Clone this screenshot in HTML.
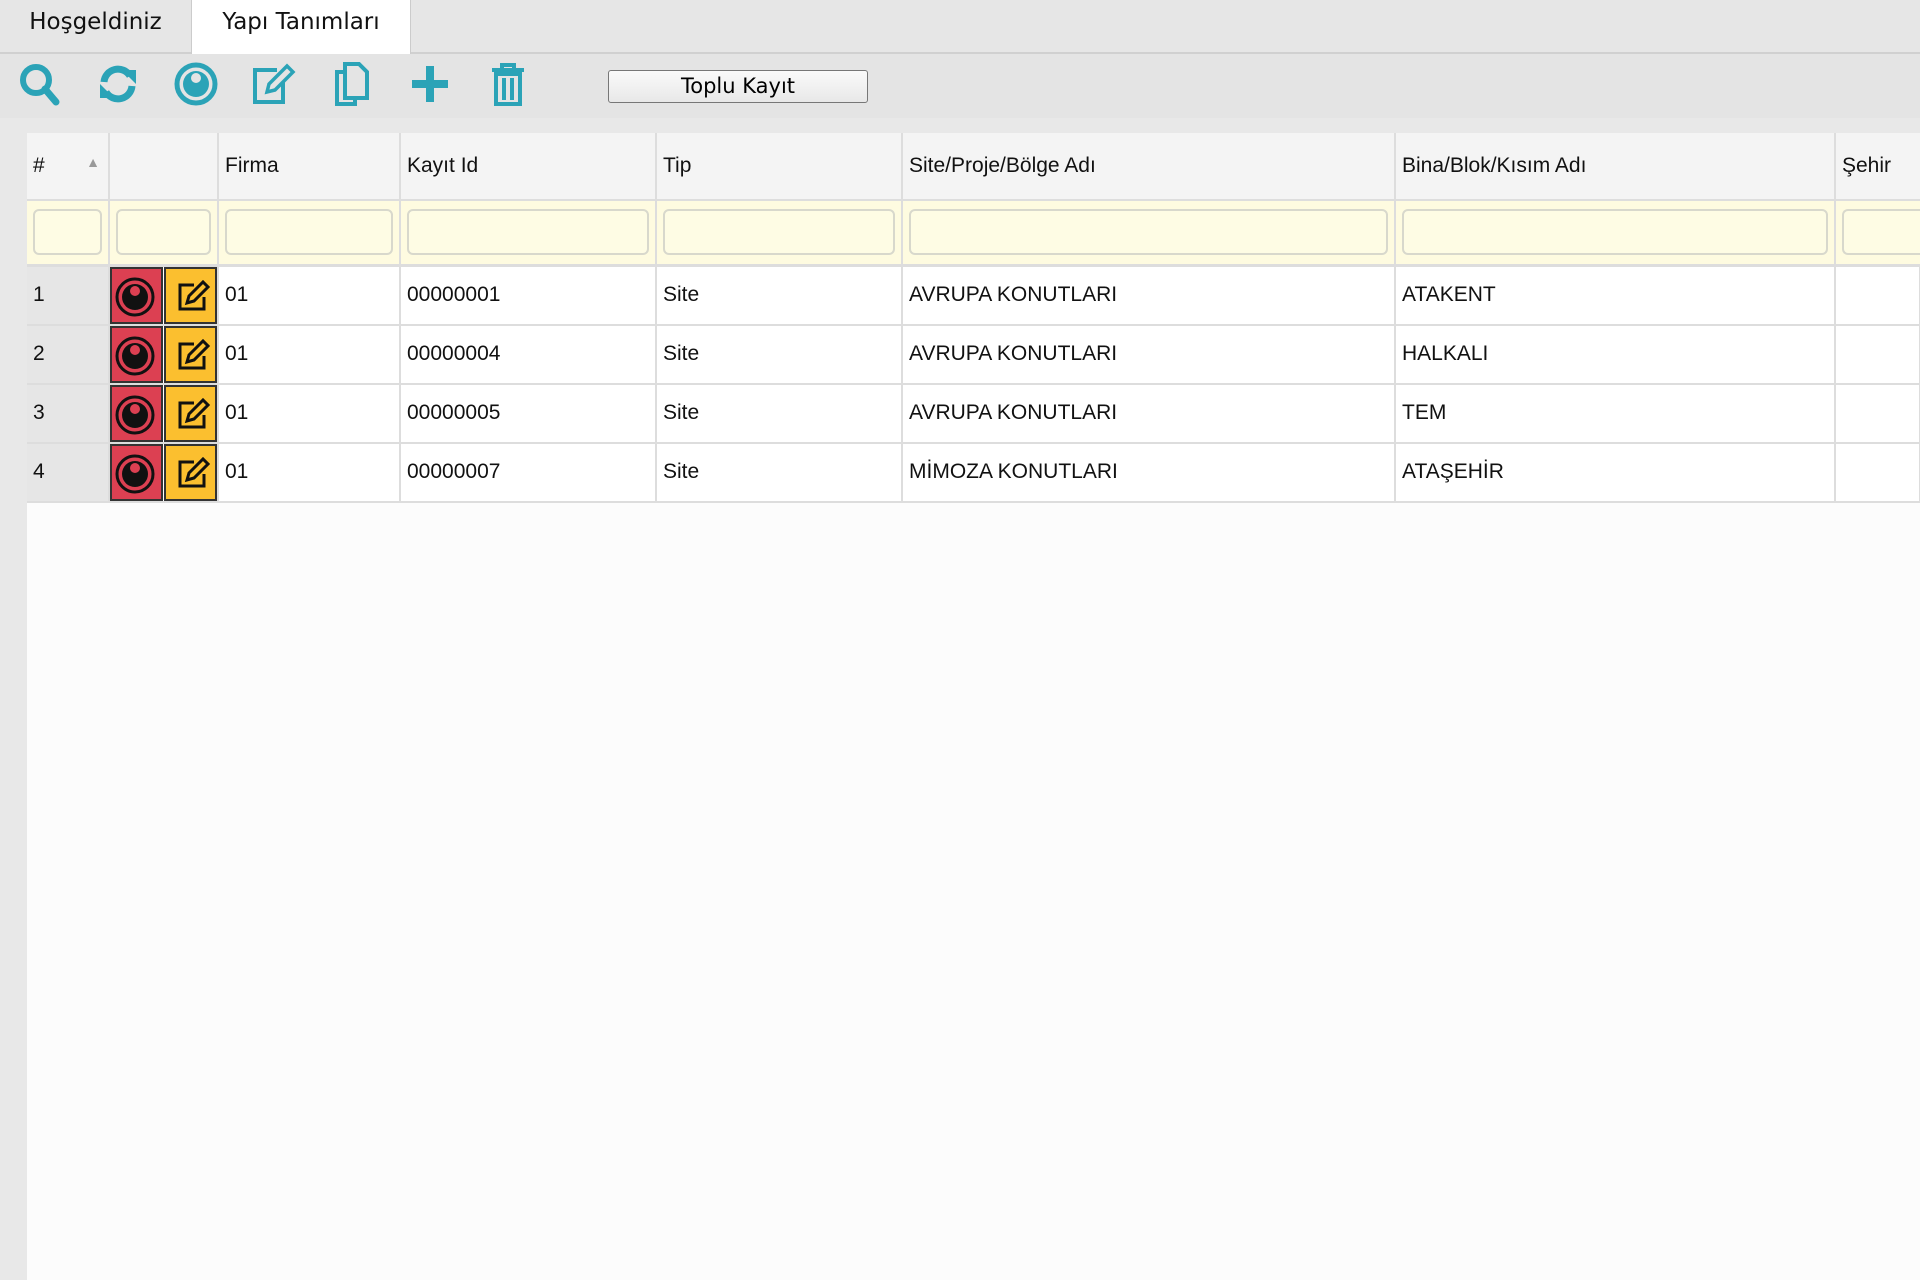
<!DOCTYPE html><html><head><meta charset="utf-8"><style>
body{margin:0;width:1920px;height:1280px;background:#e8e8e8;font-family:"Liberation Sans",sans-serif;overflow:hidden;position:relative}
.tabs{position:absolute;left:0;top:0;width:1920px;height:54px;background:#e6e6e6;border-bottom:2px solid #d0d0d0;box-sizing:border-box}
.tab{position:absolute;top:0;height:54px;box-sizing:border-box;font-family:"DejaVu Sans",sans-serif;font-size:23px;padding:9px 0 0 0;text-align:center;color:#111}
.tb{position:absolute;left:0;top:54px;width:1920px;height:64px;background:#e4e4e4}
.ic{position:absolute;top:60px;width:48px;height:48px}
.btn{position:absolute;left:608px;top:70px;width:260px;height:33px;border:1px solid #777;border-radius:3px;background:linear-gradient(#fafafa,#e8e8e8);box-sizing:border-box;font-family:"DejaVu Sans",sans-serif;font-size:21px;text-align:center;line-height:31px}
.main{position:absolute;left:27px;top:133px;width:1893px;height:1147px;background:#fcfcfc}
table{border-collapse:collapse;position:absolute;left:27px;top:133px;width:1893px;table-layout:fixed;font-size:21px;color:#111}
th{height:67px;background:#f4f4f4;text-align:left;font-weight:normal;padding:0 6px;border-right:2px solid #ddd;border-bottom:2px solid #ddd;box-sizing:border-box;overflow:hidden;white-space:nowrap}
td{padding:0 6px;border-right:2px solid #ddd;border-bottom:2px solid #ddd;height:59px;box-sizing:border-box;background:#fff;white-space:nowrap;overflow:hidden}
tr.f td{background:#fefbe0;height:65px;border-bottom:3px solid #ddd}
.inp{height:46px;border:2px solid #d8d8cc;border-radius:6px;background:#fefce4;box-sizing:border-box}
td.n{background:#e6e6e6}
td.a{padding:0;background:#fff;font-size:0;line-height:0}
.r,.y{display:inline-block;width:53px;height:57px;vertical-align:top;box-sizing:border-box;border:2px solid #333}
.r{background:#dc4052}.y{background:#fbbf2f;margin-left:1px}
</style></head><body>
<div class="tabs"></div>
<div class="tab" style="left:0;width:192px;border-right:1px solid #ccc">Hoşgeldiniz</div>
<div class="tab" style="left:192px;width:219px;background:#fff;border-right:1px solid #ccc;height:56px">Yapı Tanımları</div>
<div class="tb"></div>
<svg class="ic" style="left:16px" viewBox="0 0 48 48"><circle cx="20" cy="20" r="13" fill="none" stroke="#2ba3b7" stroke-width="6"/><path d="M29 29L40 42" stroke="#2ba3b7" stroke-width="7" stroke-linecap="round"/></svg>
<svg class="ic" style="left:94px" viewBox="0 0 48 48"><path d="M10 22A14 14 0 0 1 36 16" fill="none" stroke="#2ba3b7" stroke-width="7"/><path d="M28 10h14v14z" fill="#2ba3b7"/><path d="M38 26A14 14 0 0 1 12 32" fill="none" stroke="#2ba3b7" stroke-width="7"/><path d="M20 38H6V24z" fill="#2ba3b7"/></svg>
<svg class="ic" style="left:172px" viewBox="0 0 48 48"><circle cx="24" cy="24" r="19" fill="none" stroke="#2ba3b7" stroke-width="5"/><circle cx="24" cy="24" r="13" fill="#2ba3b7"/><circle cx="24" cy="18" r="5" fill="#e4e4e4"/></svg>
<svg class="ic" style="left:249px" viewBox="0 0 48 48"><path d="M28 10H6v32h28V22" fill="none" stroke="#2ba3b7" stroke-width="4"/><path d="M18 32l2-8 18-18 6 6-18 18z" fill="none" stroke="#2ba3b7" stroke-width="3.5"/></svg>
<svg class="ic" style="left:329px" viewBox="0 0 48 48"><path d="M16 12H8v32h18v-6" fill="none" stroke="#2ba3b7" stroke-width="4"/><path d="M16 4h14l8 8v26H16z" fill="none" stroke="#2ba3b7" stroke-width="4"/></svg>
<svg class="ic" style="left:406px" viewBox="0 0 48 48"><path d="M24 6v36M6 24h36" stroke="#2ba3b7" stroke-width="8"/></svg>
<svg class="ic" style="left:484px" viewBox="0 0 48 48"><path d="M8 10h32M18 10V5h12v5" fill="none" stroke="#2ba3b7" stroke-width="4"/><path d="M12 14h24v30H12z" fill="none" stroke="#2ba3b7" stroke-width="4"/><path d="M20 18v22M28 18v22" stroke="#2ba3b7" stroke-width="4"/></svg>
<div class="btn">Toplu Kayıt</div>
<div class="main"></div>
<table>
<colgroup><col style="width:82px"><col style="width:109px"><col style="width:182px"><col style="width:256px"><col style="width:246px"><col style="width:493px"><col style="width:440px"><col style="width:85px"></colgroup>
<tr><th>#<span style="float:right;margin-right:2px;font-size:14px;color:#999">▲</span></th><th></th><th>Firma</th><th>Kayıt Id</th><th>Tip</th><th>Site/Proje/Bölge Adı</th><th>Bina/Blok/Kısım Adı</th><th style="border-right:0">Şehir</th></tr>
<tr class="f"><td><div class="inp"></div></td><td><div class="inp"></div></td><td><div class="inp"></div></td><td><div class="inp"></div></td><td><div class="inp"></div></td><td><div class="inp"></div></td><td><div class="inp"></div></td><td style="border-right:0;padding-right:0"><div class="inp" style="border-right:0;border-radius:6px 0 0 6px"></div></td></tr>
<tr><td class="n">1</td><td class="a"><span class="r"></span><span class="y"></span></td><td>01</td><td>00000001</td><td>Site</td><td>AVRUPA KONUTLARI</td><td>ATAKENT</td><td></td></tr>
<tr><td class="n">2</td><td class="a"><span class="r"></span><span class="y"></span></td><td>01</td><td>00000004</td><td>Site</td><td>AVRUPA KONUTLARI</td><td>HALKALI</td><td></td></tr>
<tr><td class="n">3</td><td class="a"><span class="r"></span><span class="y"></span></td><td>01</td><td>00000005</td><td>Site</td><td>AVRUPA KONUTLARI</td><td>TEM</td><td></td></tr>
<tr><td class="n">4</td><td class="a"><span class="r"></span><span class="y"></span></td><td>01</td><td>00000007</td><td>Site</td><td>MİMOZA KONUTLARI</td><td>ATAŞEHİR</td><td></td></tr>
</table>
<svg style="position:absolute;left:0;top:0" width="1920" height="1280">
<g id="ri">
<circle cx="135" cy="297" r="18" fill="none" stroke="#111" stroke-width="3"/><circle cx="135" cy="297" r="13" fill="#111"/><circle cx="135" cy="291" r="5" fill="#dc4052"/>
<path d="M194 285h-14v24h24v-12" fill="none" stroke="#111" stroke-width="3"/><path d="M187 303l2-7 14-14 5 5-14 14z" fill="none" stroke="#111" stroke-width="3"/>
</g>
<use href="#ri" y="59"/><use href="#ri" y="118"/><use href="#ri" y="177"/>
</svg>
</body></html>
